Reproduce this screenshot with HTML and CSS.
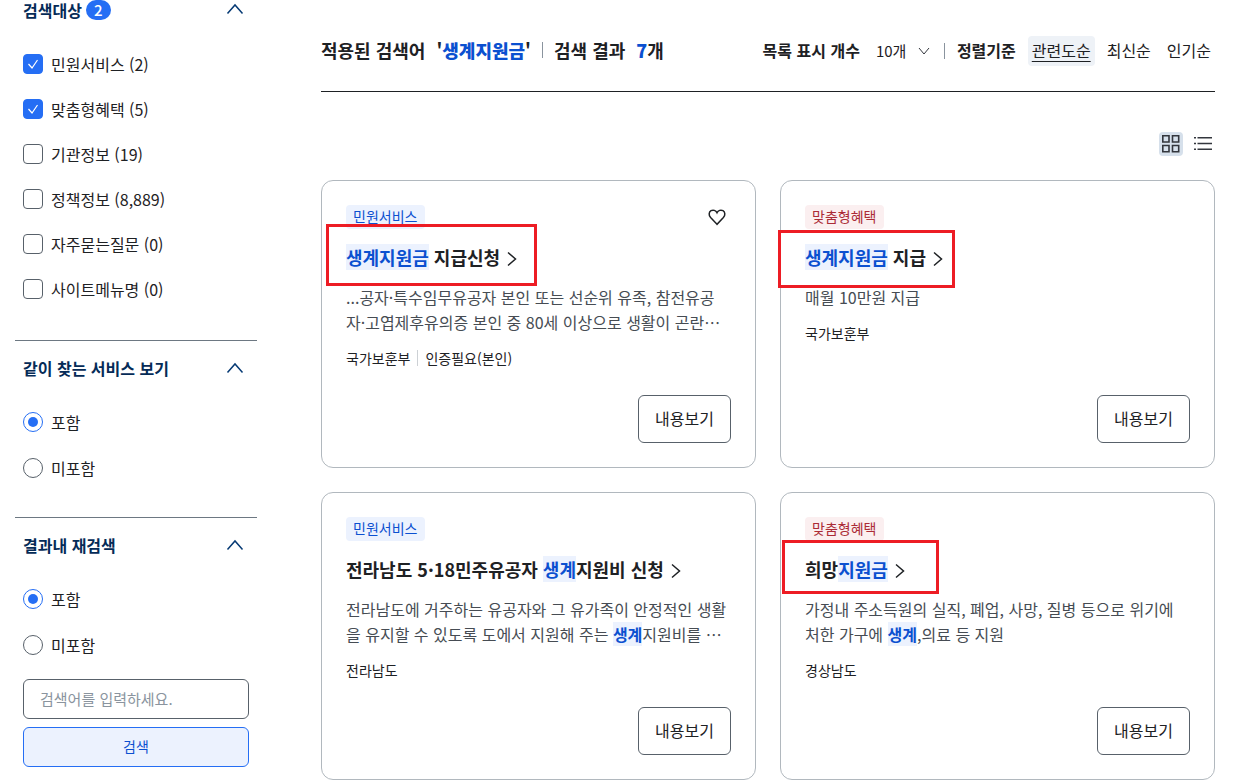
FILE: index.html
```html
<!DOCTYPE html>
<html lang="ko">
<head>
<meta charset="utf-8">
<meta name="viewport" content="width=device-width, initial-scale=1">
<title>통합검색</title>
<link rel="stylesheet" href="styles.css">
</head>
<body>
<div class="page">
  <aside class="sidebar">
    <section class="filter">
      <h2 class="filter-head">
        <button type="button" class="filter-toggle" aria-expanded="true">
          <span class="filter-title">검색대상 <span class="count">2</span></span>
          <svg class="chevron-up" viewBox="0 0 20 20" aria-hidden="true"><path d="M2.5 13.500 10 5l7.500 8.500"/></svg>
        </button>
      </h2>
      <div class="options">
        <label class="option"><input class="check" type="checkbox" checked>민원서비스 (2)</label>
        <label class="option"><input class="check" type="checkbox" checked>맞춤형혜택 (5)</label>
        <label class="option"><input class="check" type="checkbox">기관정보 (19)</label>
        <label class="option"><input class="check" type="checkbox">정책정보 (8,889)</label>
        <label class="option"><input class="check" type="checkbox">자주묻는질문 (0)</label>
        <label class="option"><input class="check" type="checkbox">사이트메뉴명 (0)</label>
      </div>
    </section>
    <section class="filter">
      <h2 class="filter-head">
        <button type="button" class="filter-toggle" aria-expanded="true">
          <span class="filter-title">같이 찾는 서비스 보기</span>
          <svg class="chevron-up" viewBox="0 0 20 20" aria-hidden="true"><path d="M2.5 14.5 10 6l7.500 8.500"/></svg>
        </button>
      </h2>
      <div class="options">
        <label class="option"><input class="radio" type="radio" name="related" checked>포함</label>
        <label class="option"><input class="radio" type="radio" name="related">미포함</label>
      </div>
    </section>
    <section class="filter">
      <h2 class="filter-head">
        <button type="button" class="filter-toggle" aria-expanded="true">
          <span class="filter-title">결과내 재검색</span>
          <svg class="chevron-up" viewBox="0 0 20 20" aria-hidden="true"><path d="M2.5 14.5 10 6l7.500 8.500"/></svg>
        </button>
      </h2>
      <div class="options">
        <label class="option"><input class="radio" type="radio" name="within" checked>포함</label>
        <label class="option"><input class="radio" type="radio" name="within">미포함</label>
      </div>
      <form class="research">
        <input class="research-input" type="text" aria-label="검색어" placeholder="검색어를 입력하세요.">
        <button class="research-button" type="button">검색</button>
      </form>
    </section>
  </aside>

  <main class="results">
    <header class="toolbar">
      <p class="summary">
        <span>적용된 검색어</span>
        <span class="keyword">'<b>생계지원금</b>'</span>
        <span class="bar"></span>
        <span>검색 결과</span>
        <span class="total"><b>7</b>개</span>
      </p>
      <div class="sorting">
        <label class="sort-label" for="page-size">목록 표시 개수</label>
        <span class="select-wrap">
          <select id="page-size" class="page-size"><option>10개</option></select>
          <svg class="select-arrow" viewBox="0 0 12 12" aria-hidden="true"><path d="M1 3l5 6 5-6"/></svg>
        </span>
        <span class="bar"></span>
        <span class="sort-label">정렬기준</span>
        <div class="sort-list">
          <button type="button" class="sort is-active" aria-pressed="true">관련도순</button>
          <button type="button" class="sort">최신순</button>
          <button type="button" class="sort">인기순</button>
        </div>
      </div>
    </header>

    <div class="views">
      <button type="button" class="view is-active" aria-label="카드형 보기">
        <svg viewBox="0 0 24 24" aria-hidden="true"><path d="M3.800 3.800h6.200v6.200H3.800zM13.500 3.800h6.200v6.200h-6.200zM3.800 13.500h6.200v6.200H3.800zM13.500 13.500h6.200v6.200h-6.200z"/></svg>
      </button>
      <button type="button" class="view" aria-label="목록형 보기">
        <svg viewBox="0 0 24 24" aria-hidden="true"><path d="M6.500 5.700H21M6.500 11.500H21M6.500 17.300H21M3 5.700h2M3 11.500h2M3 17.300h2"/></svg>
      </button>
    </div>

    <div class="cards">
      <article class="card">
        <div class="card-top">
          <span class="tag tag-service">민원서비스</span>
          <button type="button" class="like" aria-label="관심 서비스">
            <svg viewBox="0 0 20 20" aria-hidden="true"><path d="M10 17.300 3.600 10.600C1.500 8.300 1.800 5 4 3.700c2.100-1.200 4.800-.4 6 2 1.200-2.400 3.900-3.200 6-2 2.200 1.300 2.500 4.600.4 6.900z"/></svg>
          </button>
        </div>
        <h3 class="card-title"><a href="#"><mark>생계지원금</mark> 지급신청<svg class="arrow" viewBox="0 0 12 18" aria-hidden="true"><path d="M2 2.500 9.500 9 2 15.500"/></svg></a></h3>
        <p class="card-text">...공자·특수임무유공자 본인 또는 선순위 유족, 참전유공<br>자·고엽제후유의증 본인 중 80세 이상으로 생활이 곤란⋯</p>
        <ul class="meta"><li>국가보훈부</li><li>인증필요(본인)</li></ul>
        <button type="button" class="detail">내용보기</button>
        <span class="callout callout-apply"></span>
      </article>

      <article class="card">
        <div class="card-top"><span class="tag tag-benefit">맞춤형혜택</span></div>
        <h3 class="card-title"><a href="#"><mark>생계지원금</mark> 지급<svg class="arrow" viewBox="0 0 12 18" aria-hidden="true"><path d="M2 2.500 9.500 9 2 15.500"/></svg></a></h3>
        <p class="card-text">매월 10만원 지급</p>
        <ul class="meta"><li>국가보훈부</li></ul>
        <button type="button" class="detail">내용보기</button>
        <span class="callout callout-pay"></span>
      </article>

      <article class="card">
        <div class="card-top"><span class="tag tag-service">민원서비스</span></div>
        <h3 class="card-title"><a href="#">전라남도 5·18민주유공자 <mark>생계</mark>지원비 신청<svg class="arrow" viewBox="0 0 12 18" aria-hidden="true"><path d="M2 2.500 9.500 9 2 15.500"/></svg></a></h3>
        <p class="card-text">전라남도에 거주하는 유공자와 그 유가족이 안정적인 생활<br>을 유지할 수 있도록 도에서 지원해 주는 <mark>생계</mark>지원비를 ⋯</p>
        <ul class="meta"><li>전라남도</li></ul>
        <button type="button" class="detail">내용보기</button>
      </article>

      <article class="card">
        <div class="card-top"><span class="tag tag-benefit">맞춤형혜택</span></div>
        <h3 class="card-title"><a href="#">희망<mark>지원금</mark><svg class="arrow" viewBox="0 0 12 18" aria-hidden="true"><path d="M2 2.500 9.500 9 2 15.500"/></svg></a></h3>
        <p class="card-text">가정내 주소득원의 실직, 폐업, 사망, 질병 등으로 위기에<br>처한 가구에 <mark>생계</mark>,의료 등 지원</p>
        <ul class="meta"><li>경상남도</li></ul>
        <button type="button" class="detail">내용보기</button>
        <span class="callout callout-hope"></span>
      </article>
    </div>
  </main>
</div>
</body>
</html>
```
FILE: styles.css
```css
* { box-sizing: border-box; }

body {
  margin: 0;
  background: #fff;
  color: #1e2124;
  font: 400 16px/24px "Noto Sans CJK KR", sans-serif;
}

button, input, select { font: inherit; color: inherit; }
button { margin: 0; padding: 0; border: 0; background: none; cursor: pointer; }
h2, h3, p, ul { margin: 0; padding: 0; }
ul { list-style: none; }
svg { display: block; fill: none; stroke: #33363d; }

.page {
  display: flex;
  align-items: flex-start;
  gap: 64px;
  padding: 0 30px 0 15px;
}

/* Sidebar filters */
.sidebar { flex: 0 0 242px; }

.filter { padding: 16px 8px 37px; border-top: 1px solid #6d7882; }
.filter:first-child { padding: 0 8px 39px; border-top: 0; }

.filter-head { font-size: 16px; line-height: 24px; }
.filter-toggle {
  display: flex;
  align-items: center;
  justify-content: space-between;
  width: 100%;
  height: 24px;
  padding: 0 4px 2px 0;
  color: #052b57;
  font-weight: 700;
}
.filter:first-child .filter-toggle { height: 20px; padding-bottom: 0; line-height: 20px; }
.filter-title { display: flex; align-items: center; gap: 4px; }
.count {
  min-width: 25px;
  height: 20px;
  border-radius: 10px;
  background: #256ef4;
  color: #fff;
  font-size: 15px;
  font-weight: 500;
  line-height: 19px;
  text-align: center;
}
.chevron-up { width: 20px; height: 20px; stroke: #063a74; stroke-width: 1.5; }

.options { display: flex; flex-direction: column; gap: 22px; padding-top: 29px; }
.filter:first-child .options { gap: 21px; padding-top: 32px; }
.option { display: flex; align-items: center; gap: 8px; }

.check, .radio {
  appearance: none;
  display: grid;
  place-items: center;
  width: 20px;
  height: 20px;
  margin: 0;
  border: 1px solid #58616a;
  border-radius: 4px;
  background: #fff;
}
.check:checked {
  border-color: #256ef4;
  background: #256ef4 url("data:image/svg+xml,%3Csvg xmlns='http://www.w3.org/2000/svg' viewBox='0 0 18 18' fill='none' stroke='white' stroke-width='1.2'%3E%3Cpath d='M4.500 9l3.500 4 5.500-8'/%3E%3C/svg%3E") center / 18px 18px no-repeat;
}
.radio { border-radius: 50%; }
.radio:checked { border-color: #256ef4; }
.radio:checked::before {
  content: "";
  width: 10px;
  height: 10px;
  border-radius: 50%;
  background: #256ef4;
}

.research { display: flex; flex-direction: column; gap: 8px; padding-top: 22px; }
.research-input, .research-button {
  width: 100%;
  height: 40px;
  border-radius: 6px;
  font-size: 15px;
}
.research-input { padding: 0 16px 2px; border: 1px solid #58616a; background: #fff; }
.research-input::placeholder { color: #8a949e; opacity: 1; }
.research-button { padding-bottom: 3px; border: 1px solid #256ef4; background: #ecf2fe; color: #0b50d0; font-size: 14px; }

/* Result list */
.results { flex: 1; min-width: 0; }

.toolbar {
  display: flex;
  align-items: center;
  justify-content: space-between;
  padding: 36px 0 25px;
  border-bottom: 1px solid #1e2124;
}
.summary { display: flex; align-items: center; gap: 11px; padding-bottom: 2px; font-size: 18px; font-weight: 700; }
.summary b { color: #0b50d0; }
.bar { width: 1px; height: 16px; background: #8a949e; }

.sorting { display: flex; align-items: center; gap: 12px; }
.sort-label { padding-bottom: 2px; font-weight: 700; }
.select-wrap { display: flex; align-items: center; padding: 0 2px 0 4px; }
.page-size {
  appearance: none;
  width: 54px;
  margin-right: -12px;
  padding: 0;
  border: 0;
  background: none;
  font-size: 15px;
  line-height: 24px;
}
.select-arrow { width: 12px; height: 12px; pointer-events: none; }
.sort-list { display: flex; gap: 8px; }
.sort { height: 30px; padding: 0 4px 2px; border-radius: 4px; }
.sort.is-active {
  background: #eef2f7;
  text-decoration: underline;
  text-underline-offset: 4px;
}

.views { display: flex; justify-content: flex-end; gap: 8px; padding: 40px 0 24px; }
.view { width: 24px; height: 24px; border-radius: 4px; }
.view.is-active { background: #d6e0eb; }
.view svg { stroke-width: 1.6; }

.cards { display: grid; grid-template-columns: 1fr 1fr; gap: 24px; }
.card {
  position: relative;
  display: flex;
  flex-direction: column;
  min-height: 288px;
  padding: 24px;
  border: 1px solid #b1b8be;
  border-radius: 12px;
}
.card-top { display: flex; align-items: center; justify-content: space-between; }
.tag { height: 24px; padding: 0 8px 0 7px; border-radius: 4px; font-size: 14px; line-height: 22px; }
.tag-service { background: #ecf2fe; color: #0b50d0; }
.tag-benefit { background: #fbeff0; color: #ab2b36; }
.like { width: 28px; height: 24px; padding: 2px 4px; }
.like svg { width: 20px; height: 20px; stroke: #1e2124; stroke-width: 1.5; }

.card-title { padding: 15px 0; font-size: 18px; line-height: 26px; }
.card-title a { color: inherit; text-decoration: none; }
.arrow { display: inline-block; width: 12px; height: 18px; margin-left: 6px; vertical-align: -3px; stroke: #1e2124; stroke-width: 1.5; }
mark { background: #ecf2fe; color: #0b50d0; font-weight: 700; }

.card-text { color: #464c53; line-height: 25px; }
.meta { display: flex; align-items: center; padding-top: 12px; font-size: 14px; line-height: 22px; }
.meta li { display: flex; align-items: center; }
.meta li + li::before {
  content: "";
  width: 1px;
  height: 16px;
  margin: 0 7px;
  background: #cdd1d5;
}
.detail {
  align-self: flex-end;
  height: 48px;
  margin-top: auto;
  padding: 0 16px 3px;
  border: 1px solid #58616a;
  border-radius: 6px;
}

/* Red frames drawn over the titles */
.callout { position: absolute; border: 3px solid #ed1c24; pointer-events: none; }
.callout-apply { left: 4px; top: 43px; width: 211px; height: 62px; }
.callout-pay { left: -3px; top: 49px; width: 177px; height: 58px; }
.callout-hope { left: 1px; top: 47px; width: 157px; height: 54px; }
```
